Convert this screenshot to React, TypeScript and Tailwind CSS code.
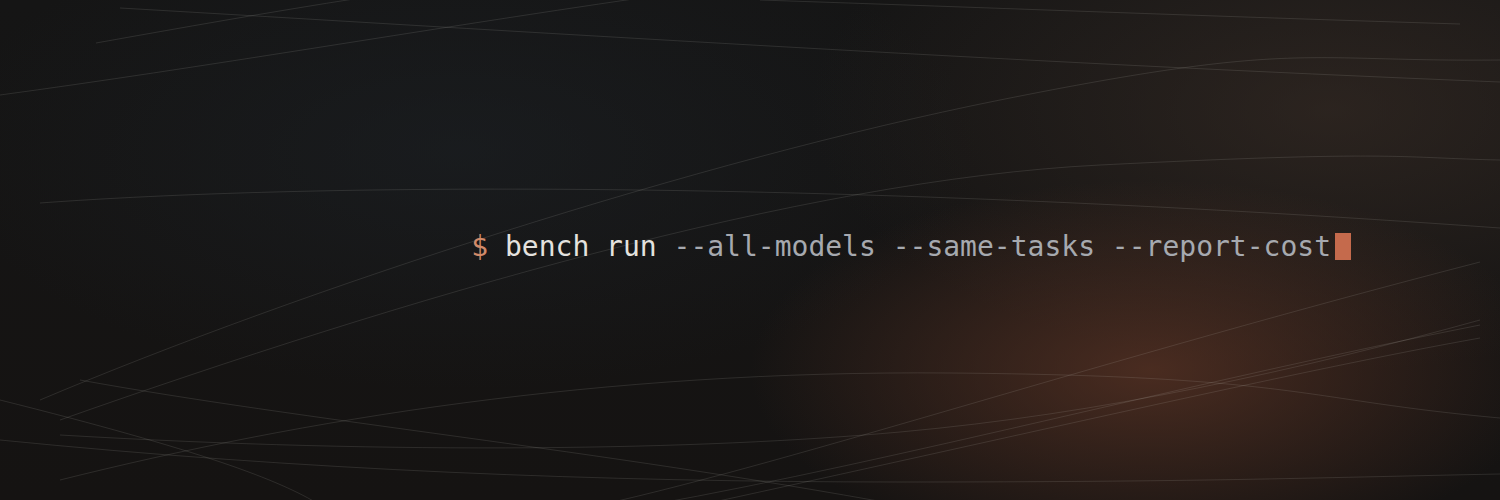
const lines = [
  "M 0 95 C 200 68, 420 30, 640 -2",
  "M 96 43 C 180 28, 270 12, 360 -2",
  "M 120 8 C 500 30, 1000 62, 1500 82",
  "M 760 0 C 1000 8, 1200 16, 1460 24",
  "M 40 203 C 300 184, 800 178, 1500 228",
  "M 40 400 C 300 290, 700 160, 1000 100 S 1300 62, 1500 60",
  "M 60 420 C 400 300, 800 180, 1100 165 S 1400 158, 1500 160",
  "M 80 380 C 300 420, 600 450, 900 505",
  "M 60 480 C 300 420, 600 370, 950 373 S 1300 400, 1500 418",
  "M 60 435 C 400 455, 700 450, 900 432 S 1300 370, 1480 320",
  "M 600 505 C 800 460, 1100 360, 1480 262",
  "M 650 505 C 900 460, 1200 380, 1480 325",
  "M 700 505 C 1000 440, 1300 370, 1480 338",
  "M 0 440 C 300 470, 600 482, 900 482 S 1300 478, 1500 474",
  "M 0 400 C 200 450, 280 480, 320 505",
];

export default function App() {
  return (
    <div className="relative w-[1500px] h-[500px] overflow-hidden bg-[#151516] bg-[radial-gradient(ellipse_400px_190px_at_1150px_370px,rgba(96,54,38,0.7),transparent),radial-gradient(ellipse_520px_260px_at_1330px_110px,rgba(62,48,40,0.55),transparent),radial-gradient(ellipse_520px_240px_at_460px_150px,rgba(30,36,42,0.45),transparent),linear-gradient(180deg,#151515,#151312)]">
      <svg
        className="absolute inset-0 pointer-events-none"
        width="1500"
        height="500"
        viewBox="0 0 1500 500"
        fill="none"
      >
        {lines.map((d, i) => (
          <path key={i} d={d} stroke="rgba(210,205,200,0.13)" strokeWidth="1" />
        ))}
      </svg>

      <div className="relative flex h-full items-center justify-end pr-[149px] pb-[7px]">
        <div className="flex items-center font-['DejaVu_Sans_Mono',monospace] text-[28px] leading-[33px] whitespace-pre">
          <span className="text-[#d08a6a]">$ </span>
          <span className="text-[#e4e2df]">bench run </span>
          <span className="text-[#a6a9af]">--all-models --same-tasks --report-cost</span>
          <span className="ml-[4px] w-[16px] h-[27px] bg-[#c56a4c]" />
        </div>
      </div>
    </div>
  );
}
